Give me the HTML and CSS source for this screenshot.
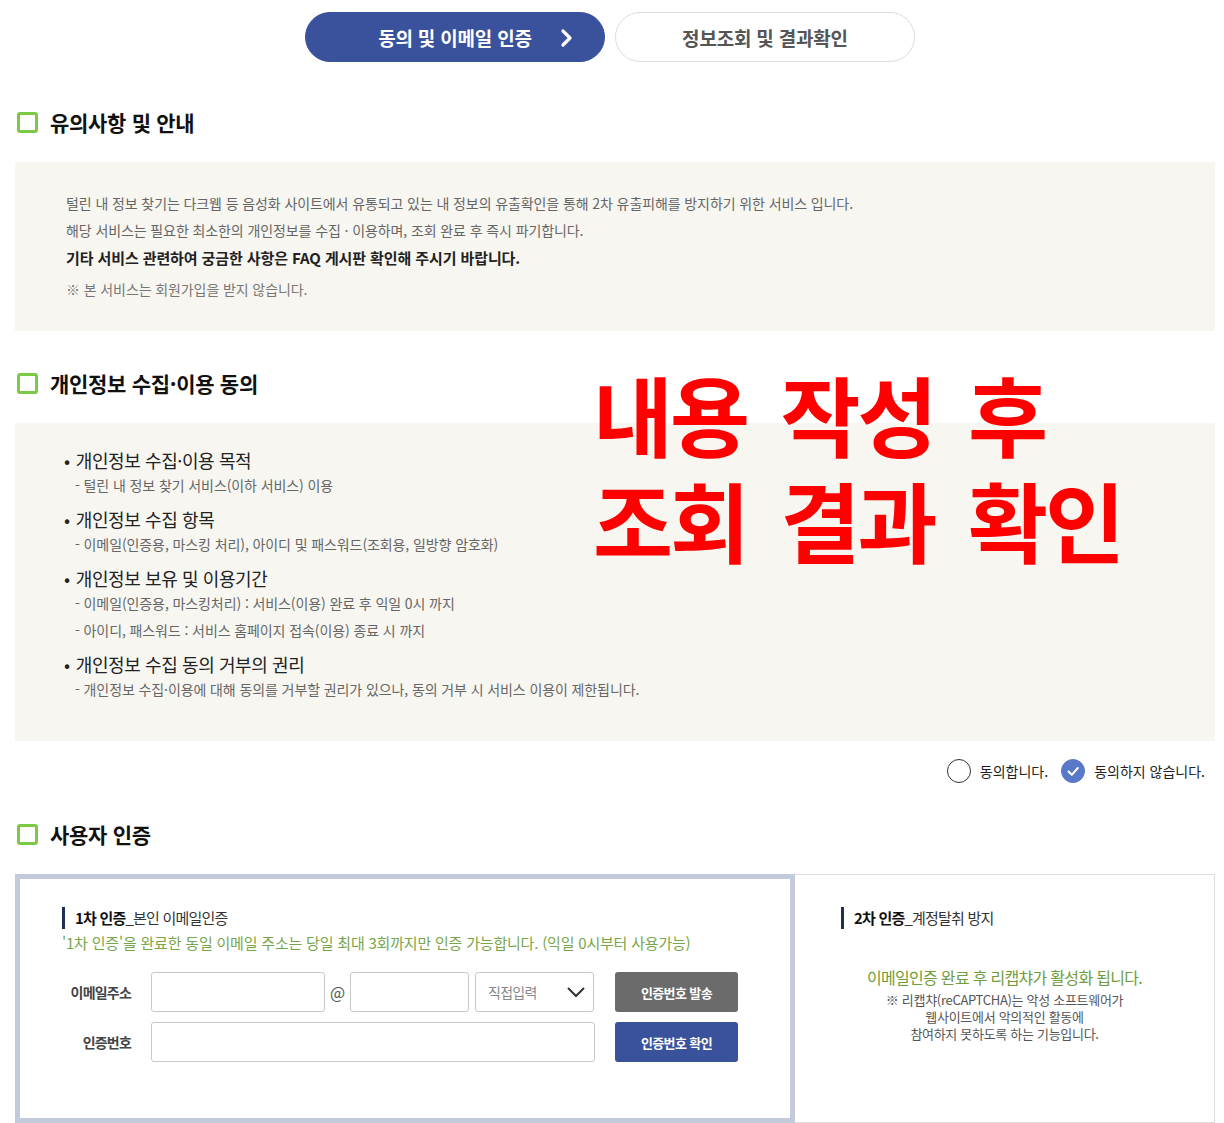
FILE: index.html
```html
<!DOCTYPE html>
<html lang="ko">
<head>
<meta charset="utf-8">
<title>털린 내 정보 찾기</title>
<link rel="stylesheet" href="styles.css">
</head>
<body>
<div class="page">
  <nav class="tabs">
    <div class="tab tab-active">
      <span>동의 및 이메일 인증</span>
      <svg class="tab-arrow" width="14" height="20" viewBox="0 0 14 20"><polyline points="3,3 10,10 3,17" fill="none" stroke="#fff" stroke-width="3.2" stroke-linecap="round" stroke-linejoin="round"/></svg>
    </div>
    <div class="tab">정보조회 및 결과확인</div>
  </nav>

  <h2 class="sec-title first"><span class="sq"></span>유의사항 및 안내</h2>
  <div class="notice">
    <p>털린 내 정보 찾기는 다크웹 등 음성화 사이트에서 유통되고 있는 내 정보의 유출확인을 통해 2차 유출피해를 방지하기 위한 서비스 입니다.</p>
    <p>해당 서비스는 필요한 최소한의 개인정보를 수집 · 이용하며, 조회 완료 후 즉시 파기합니다.</p>
    <p class="strong">기타 서비스 관련하여 궁금한 사항은 FAQ 게시판 확인해 주시기 바랍니다.</p>
    <p class="note">※ 본 서비스는 회원가입을 받지 않습니다.</p>
  </div>

  <div class="consent-wrap">
    <h2 class="sec-title"><span class="sq"></span>개인정보 수집·이용 동의</h2>
    <div class="notice consent">
      <div class="item">
        <h3>개인정보 수집·이용 목적</h3>
        <p>- 털린 내 정보 찾기 서비스(이하 서비스) 이용</p>
      </div>
      <div class="item">
        <h3>개인정보 수집 항목</h3>
        <p>- 이메일(인증용, 마스킹 처리), 아이디 및 패스워드(조회용, 일방향 암호화)</p>
      </div>
      <div class="item">
        <h3>개인정보 보유 및 이용기간</h3>
        <p>- 이메일(인증용, 마스킹처리) : 서비스(이용) 완료 후 익일 0시 까지</p>
        <p class="more">- 아이디, 패스워드 : 서비스 홈페이지 접속(이용) 종료 시 까지</p>
      </div>
      <div class="item">
        <h3>개인정보 수집 동의 거부의 권리</h3>
        <p>- 개인정보 수집·이용에 대해 동의를 거부할 권리가 있으나, 동의 거부 시 서비스 이용이 제한됩니다.</p>
      </div>
    </div>
    <div class="overlay-note">내용 작성 후<br>조회 결과 확인</div>
  </div>

  <div class="agree-row">
    <label class="radio"><span class="circle"></span>동의합니다.</label>
    <label class="radio"><span class="circle checked"><svg width="24" height="24" viewBox="0 0 24 24"><polyline points="7.5,12.5 10.8,15.8 16.8,9" fill="none" stroke="#fff" stroke-width="2" stroke-linecap="round" stroke-linejoin="round"/></svg></span>동의하지 않습니다.</label>
  </div>

  <h2 class="sec-title third"><span class="sq"></span>사용자 인증</h2>
  <div class="auth">
    <div class="auth-left">
      <h4 class="auth-title"><b>1차 인증</b>_본인 이메일인증</h4>
      <p class="green">'1차 인증'을 완료한 동일 이메일 주소는 당일 최대 3회까지만 인증 가능합니다. (익일 0시부터 사용가능)</p>
      <div class="form-row">
        <span class="label">이메일주소</span>
        <span class="input w-id"></span>
        <span class="at">@</span>
        <span class="input w-domain"></span>
        <span class="input select">직접입력<svg width="20" height="12" viewBox="0 0 20 12"><polyline points="2,2 10,10 18,2" fill="none" stroke="#333" stroke-width="2"/></svg></span>
        <span class="btn btn-gray">인증번호 발송</span>
      </div>
      <div class="form-row">
        <span class="label">인증번호</span>
        <span class="input w-code"></span>
        <span class="btn btn-blue">인증번호 확인</span>
      </div>
    </div>
    <div class="auth-right">
      <h4 class="auth-title"><b>2차 인증</b>_계정탈취 방지</h4>
      <p class="green center">이메일인증 완료 후 리캡챠가 활성화 됩니다.</p>
      <p class="gray-small">※ 리캡챠(reCAPTCHA)는 악성 소프트웨어가<br>웹사이트에서 악의적인 활동에<br>참여하지 못하도록 하는 기능입니다.</p>
    </div>
  </div>
</div>
</body>
</html>
```

FILE: styles.css
```css
* { box-sizing: border-box; }
body {
  margin: 0;
  font-family: "Noto Sans CJK KR", "Noto Sans", sans-serif;
  color: #333;
  background: #fff;
}
.page {
  width: 1200px;
  margin-left: 15px;
}
.tabs {
  display: flex;
  justify-content: center;
  gap: 10px;
  padding-top: 12px;
  padding-right: 10px;
}
.tab {
  width: 300px;
  height: 50px;
  border: 1px solid #dcdcdc;
  border-radius: 25px;
  display: flex;
  align-items: center;
  justify-content: center;
  font-size: 19px;
  font-weight: 700;
  letter-spacing: -0.2px;
  color: #555;
  position: relative;
}
.tab-active {
  background: #3a519c;
  border-color: #3a519c;
  color: #fff;
}
.tab-arrow {
  position: absolute;
  right: 30px;
  top: 15px;
}
.sec-title {
  display: flex;
  align-items: center;
  margin: 37px 0 25px;
  height: 30px;
  font-size: 21px;
  font-weight: 700;
  letter-spacing: -0.3px;
  color: #111;
}
.sec-title.first { margin-top: 45px; }
.sec-title.third { margin-top: 36px; }
.sq {
  width: 21px;
  height: 21px;
  border: 3.5px solid #7bc944;
  border-radius: 3px;
  margin: 0 12px 0 2px;
}
.notice {
  background: #f7f6f1;
  padding: 28px 0 28px 51px;
  font-size: 14px;
  letter-spacing: -0.1px;
  color: #666;
}
.notice p {
  margin: 0;
  line-height: 27px;
}
.notice p.strong {
  color: #222;
  font-weight: 700;
  font-size: 15px;
}
.notice p.note {
  margin-top: 5px;
  font-size: 14px;
  color: #777;
}
.consent-wrap {
  position: relative;
}
.consent {
  padding: 26px 0 39px 49px;
}
.item {
  margin-bottom: 10px;
}
.item:last-child { margin-bottom: 0; }
.item h3 {
  margin: 0;
  font-size: 18px;
  font-weight: 400;
  letter-spacing: -0.4px;
  line-height: 23px;
  color: #222;
}
.item h3::before {
  content: "•";
  margin-right: 6px;
}
.item p {
  margin: 0 0 0 11px;
  font-size: 14px;
  line-height: 26px;
  color: #666;
  letter-spacing: -0.1px;
}
.item p.more { margin-top: 1px; }
.overlay-note {
  position: absolute;
  left: 578px;
  top: -8px;
  font-size: 87px;
  font-weight: 700;
  line-height: 106px;
  color: #ff0000;
  word-spacing: 12px;
  letter-spacing: -3px;
  white-space: nowrap;
}
.agree-row {
  display: flex;
  justify-content: flex-end;
  align-items: center;
  gap: 13px;
  margin-top: 18px;
  padding-right: 10px;
}
.radio {
  display: flex;
  align-items: center;
  font-size: 14px;
  letter-spacing: 0;
  color: #222;
}
.circle {
  width: 24px;
  height: 24px;
  border-radius: 50%;
  border: 1.5px solid #333;
  margin-right: 9px;
  display: inline-block;
}
.circle.checked {
  background: #5a78c8;
  border-color: #5a78c8;
  position: relative;
}
.circle.checked svg {
  position: absolute;
  left: -1.5px;
  top: -1.5px;
}
.auth {
  display: flex;
  height: 249px;
}
.auth-left {
  width: 780px;
  border: 5px solid #c3cadb;
  padding: 28px 0 0 42px;
}
.auth-right {
  flex: 1;
  border: 1px solid #dcdcdc;
  border-left: none;
  padding: 32px 0 0 46px;
}
.auth-title {
  margin: 0;
  height: 22px;
  line-height: 22px;
  border-left: 3px solid #1f2f5a;
  padding-left: 10px;
  font-size: 15px;
  font-weight: 400;
  letter-spacing: -0.8px;
  color: #333;
}
.auth-title b {
  font-weight: 700;
  color: #111;
}
.green {
  margin: 3px 0 0;
  font-size: 15px;
  line-height: 22px;
  color: #78a64a;
  letter-spacing: -0.2px;
}
.green.center {
  text-align: center;
  margin: 37px 0 0 -46px;
  font-size: 16px;
  color: #6f9c3a;
  letter-spacing: -0.7px;
}
.gray-small {
  margin: 3px 0 0 -46px;
  text-align: center;
  font-size: 13px;
  line-height: 17px;
  color: #555;
  letter-spacing: -0.3px;
}
.form-row {
  display: flex;
  align-items: center;
  height: 40px;
  margin-top: 18px;
}
.form-row + .form-row {
  margin-top: 10px;
}
.label {
  width: 69px;
  margin-right: 20px;
  text-align: right;
  font-size: 14px;
  font-weight: 700;
  color: #444;
  letter-spacing: -0.8px;
}
.input {
  height: 40px;
  border: 1px solid #c8c8c8;
  border-radius: 3px;
  background: #fff;
}
.w-id { width: 174px; }
.w-domain { width: 119px; }
.w-code { width: 444px; }
.at {
  width: 25px;
  text-align: center;
  font-size: 16px;
  color: #555;
}
.select {
  width: 119px;
  margin-left: 6px;
  display: flex;
  align-items: center;
  justify-content: space-between;
  padding: 0 7px 0 12px;
  font-size: 14px;
  color: #888;
  letter-spacing: -0.7px;
}
.btn {
  width: 123px;
  height: 40px;
  border-radius: 3px;
  margin-left: 20px;
  display: flex;
  align-items: center;
  justify-content: center;
  color: #fff;
  font-size: 13px;
  font-weight: 700;
  letter-spacing: -0.6px;
}
.btn-gray { background: #6b6b6b; margin-left: 21px; }
.btn-blue { background: #3a519c; }
```
